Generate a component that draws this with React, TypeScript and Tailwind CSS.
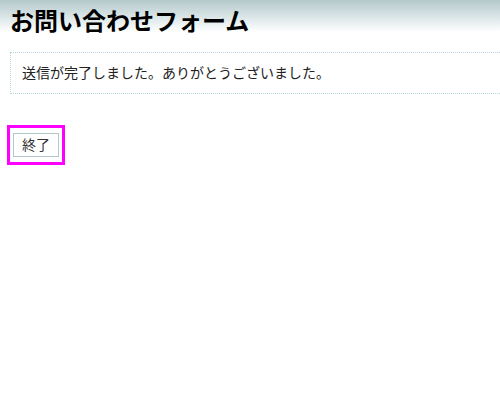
export default function App() {
  return (
    <div className="h-[396px] w-[500px] overflow-hidden bg-white font-['Liberation_Sans','Noto_Sans_CJK_JP',sans-serif] text-[#222]">
      <h1 className="bg-gradient-to-b from-[#b3c9cc] to-white to-[32px] px-[10px] pt-[8px] pb-[10px] text-[24px] font-bold leading-[28px] text-black">
        お問い合わせフォーム
      </h1>

      <div className="ml-[10px] mt-[6px] w-[520px] border border-dotted border-[#b4d8dc] px-[11px] py-[10px] text-[14px] leading-[20px]">
        送信が完了しました。ありがとうございました。
      </div>

      <div className="ml-[7px] mt-[31px] inline-block border-[3px] border-[#ff00ff] px-[3px] py-[5px]">
        <button className="border border-[#b3c8c8] bg-white px-[8px] py-[2px] text-[14px] leading-[18px] text-[#333]">
          終了
        </button>
      </div>
    </div>
  )
}
